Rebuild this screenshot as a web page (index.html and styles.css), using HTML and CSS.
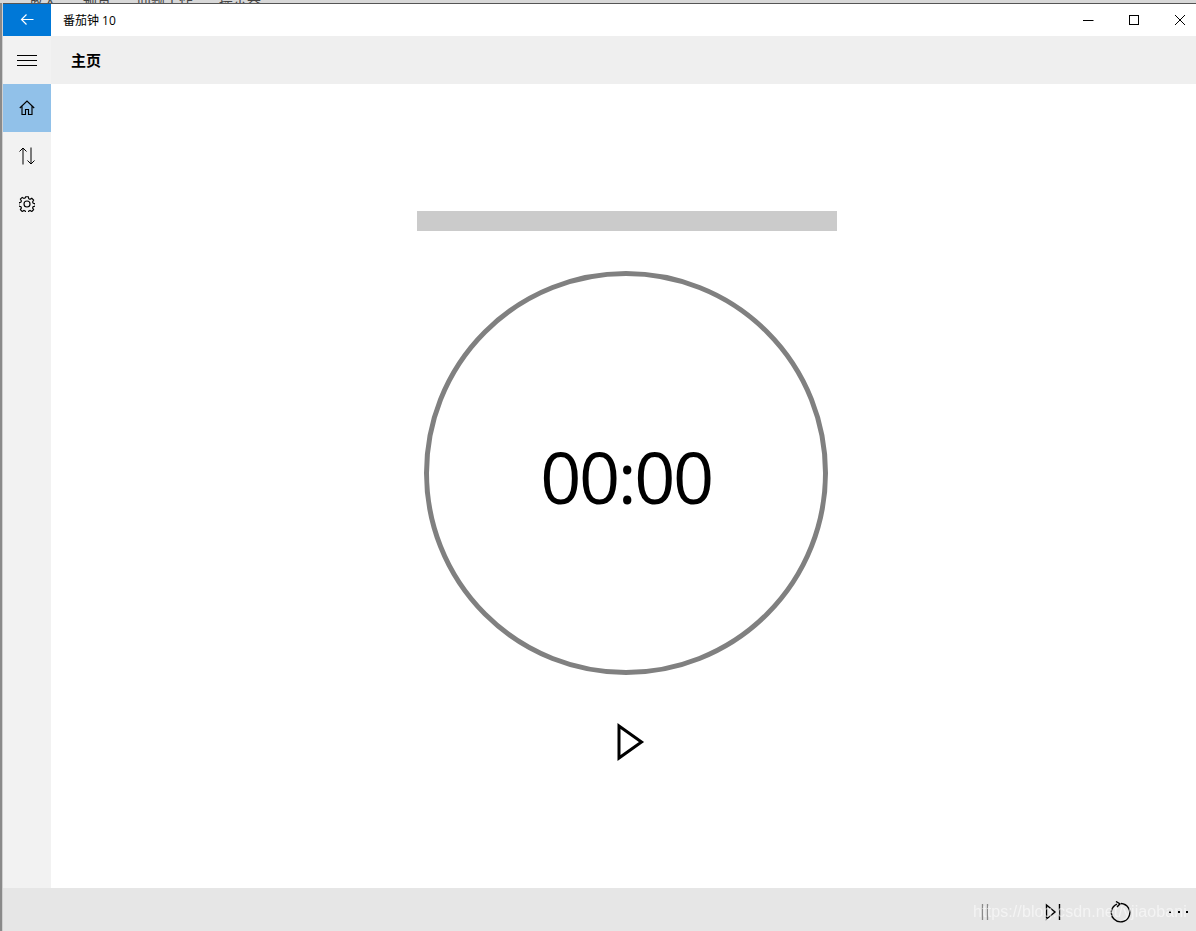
FILE: index.html
```html
<!DOCTYPE html>
<html lang="zh">
<head>
<meta charset="utf-8">
<title>番茄钟 10</title>
<link rel="stylesheet" href="styles.css">
</head>
<body>
<div class="behind"><span>放大</span><span>预览</span><span>问题工作</span><span>提示器</span></div>
<div class="window">
  <header class="titlebar">
    <button class="back" aria-label="返回">
      <svg width="14" height="14" viewBox="0 0 14 14" class="icon-w"><path d="M13.500 6.500H1.500M6.500 1.500l-5 5 5 5"/></svg>
    </button>
    <div class="app-title">番茄钟 10</div>
    <div class="caption">
      <span class="cap"><svg width="12" height="12" viewBox="0 0 12 12" class="icon"><path d="M1 6.500h10.500"/></svg></span>
      <span class="cap"><svg width="12" height="12" viewBox="0 0 12 12" class="icon"><rect x="1.500" y="1.500" width="9" height="9"/></svg></span>
      <span class="cap"><svg width="12" height="12" viewBox="0 0 12 12" class="icon"><path d="M1 1l10 10M11 1L1 11"/></svg></span>
    </div>
  </header>
  <div class="middle">
    <nav class="rail">
      <div class="rail-item"><svg width="20" height="16" viewBox="0 0 20 16" class="icon"><path d="M0 3.500h20M0 8.500h20M0 13.500h20"/></svg></div>
      <div class="rail-item active"><svg width="16" height="16" viewBox="0 0 16 16" class="icon med"><path d="M.8 8L8 1l7.200 7M3 6v8.500h3.500V9.500h3v5H13V6"/></svg></div>
      <div class="rail-item"><svg width="16" height="18" viewBox="0 0 16 18" class="icon"><path d="M4 17.500V1M.5 4.500L4 1l3.500 3.500M12 .5V17M8.500 13.500L12 17l3.500-3.500"/></svg></div>
      <div class="rail-item"><svg width="16" height="16" viewBox="0 0 16 16" class="icon med"><circle cx="8" cy="8" r="3"/><path d="M6.700.7h2.600l.4 2 1.300.6 1.800-1 1.800 1.800-1 1.800.6 1.300 2 .4v2.600l-2 .4-.6 1.300 1 1.800-1.800 1.800-1.800-1-1.300.6-.4 2H6.700l-.4-2-1.300-.6-1.800 1-1.800-1.800 1-1.800-.6-1.300-2-.4V6.700l2-.4.6-1.300-1-1.800 1.800-1.800 1.800 1 1.300-.6z"/></svg></div>
    </nav>
    <div class="content">
      <div class="page-head">主页</div>
      <main class="timer">
        <div class="task-bar"></div>
        <div class="dial">00:00</div>
        <button class="play" aria-label="开始">
          <svg width="28" height="38" viewBox="0 0 28 38" class="icon thick"><path d="M2 3L24.500 19 2 35z"/></svg>
        </button>
      </main>
    </div>
  </div>
  <footer class="commandbar">
    <span class="cmd"><svg width="10" height="18" viewBox="0 0 10 18" class="icon dim"><path d="M2.500 1v16M7.500 1v16"/></svg></span>
    <span class="cmd"><svg width="16" height="18" viewBox="0 0 16 18" class="icon strong"><path d="M1.500 2L10 9 1.500 16zM14.500 1v16"/></svg></span>
    <span class="cmd"><svg width="22" height="22" viewBox="0 0 22 22" class="icon strong"><path d="M7 3.200a9.200 9.200 0 1 0 4-.7M6 .5L10 2.800 7 6"/></svg></span>
    <span class="dots"><i></i><i></i><i></i></span>
    <span class="watermark">https://blog.csdn.net/yjiaobani</span>
  </footer>
</div>
</body>
</html>
```

FILE: styles.css
```css
* { box-sizing: border-box; }
html, body { margin: 0; height: 100%; overflow: hidden; }
body {
  background: #8a8a8a;
  font-family: "Open Sans", "Noto Sans CJK SC", sans-serif;
  color: #000;
  display: flex;
  flex-direction: column;
}
.behind {
  height: 3px;
  flex: none;
  background: #d8d8d8;
  overflow: hidden;
  display: flex;
  gap: 26px;
  padding-left: 29px;
  font: 14px/1px "Noto Sans CJK SC", sans-serif;
  color: #444;
}
.window {
  flex: 1;
  min-height: 0;
  display: flex;
  flex-direction: column;
  margin-left: 3px;
  background: #fff;
  border-top: 1px solid #555;
  box-shadow: -1px 0 0 #d0d0d0;
  overflow: hidden;
}
.icon, .icon-w { fill: none; stroke: #000; stroke-width: 1; display: block; }
.icon-w { stroke: #fff; stroke-width: 1.200; }
.icon.thick { stroke-width: 3; }
.icon.dim { stroke: #8a8a8a; stroke-width: 1.300; }
.icon.med { stroke-width: 1.150; }
.icon.strong { stroke-width: 1.400; }
.titlebar { height: 32px; display: flex; align-items: center; flex: none; }
.back {
  width: 48px;
  height: 32px;
  border: 0;
  padding: 0;
  background: #0078d7;
  display: flex;
  align-items: center;
  justify-content: center;
}
.app-title { margin-left: 12px; font-size: 12px; flex: 1; }
.caption { display: flex; margin-right: -7px; }
.cap { width: 46px; height: 32px; display: flex; align-items: center; justify-content: center; }
.middle { flex: 1; min-height: 0; display: flex; }
.rail { width: 48px; background: #f2f2f2; flex: none; }
.rail-item { height: 48px; display: flex; align-items: center; justify-content: center; }
.rail-item.active { background: #91c1e9; }
.content { flex: 1; min-width: 0; display: flex; flex-direction: column; }
.page-head {
  height: 48px;
  flex: none;
  background: #efefef;
  display: flex;
  align-items: center;
  padding-left: 20px;
  padding-bottom: 1px;
  font-size: 15px;
  font-weight: 700;
}
.timer { flex: 1; display: flex; flex-direction: column; align-items: center; padding: 127px 0 0 7px; }
.task-bar { width: 420px; height: 20px; background: #cbcbcb; flex: none; }
.dial {
  width: 404px;
  height: 404px;
  margin: 40px 2px 0 0;
  padding-top: 6px;
  border: 5px solid #808080;
  border-radius: 50%;
  display: flex;
  align-items: center;
  justify-content: center;
  font-size: 72px;
  letter-spacing: -2.400px;
  flex: none;
}
.play {
  border: 0;
  padding: 0;
  background: none;
  margin-top: 48px;
  margin-left: 8px;
}
.commandbar {
  height: 43px;
  flex: none;
  padding-top: 5px;
  background: #e6e6e6;
  position: relative;
  display: flex;
  align-items: center;
  justify-content: flex-end;
}
.cmd { display: flex; align-items: center; justify-content: center; width: 68px; }
.dots { display: flex; gap: 6.500px; width: 41px; padding-left: 14px; }
.dots i { width: 2px; height: 2px; background: #000; }
.watermark {
  position: absolute;
  right: 9px;
  top: 15px;
  font: 16px "Liberation Sans", sans-serif;
  letter-spacing: .1px;
  color: rgba(255, 255, 255, .55);
  white-space: nowrap;
  filter: blur(.4px);
}
```
